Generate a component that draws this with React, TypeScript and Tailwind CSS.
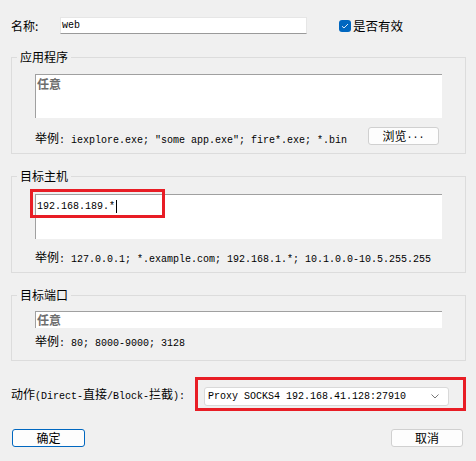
import { FC, ReactNode } from "react";

const mono = "font-['Liberation_Mono','Noto_Sans_CJK_SC',monospace]";

interface GroupProps {
  title: string
  className?: string
  children: ReactNode
}

const Group: FC<GroupProps> = ({ title, className, children }) => {
  return (
    <div className={`relative border border-[#dcdcdc] ${className ?? ""}`}>
      <span className="absolute -top-[8px] left-[5px] bg-[#f0f0f0] px-[3px] text-[12px] leading-[14px] text-black">
        {title}
      </span>
      {children}
    </div>
  );
}

const Example: FC<{ text: string }> = ({ text }) => {
  return (
    <span className={`${mono} block leading-[12px] text-[10px] text-black whitespace-pre`}>
      <span className="text-[12px]">举例</span>{text}
    </span>
  );
}

const Field: FC<{ className?: string; children?: ReactNode }> = ({ className, children }) => {
  return (
    <div className={`bg-white border-t border-l border-[#a0a0a0] ${className ?? ""}`}>
      {children}
    </div>
  );
}

const Placeholder = () => (
  <span className="block pl-[1px] pt-[2px] text-[12px] leading-[14px] font-bold text-[#6d6d6d]">任意</span>
);

const App: FC = () => {
  return (
    <div className="w-[476px] h-[461px] bg-[#f0f0f0] pt-[17px] pl-[11px] pr-[10px] font-['Noto_Sans_CJK_SC',sans-serif] text-black overflow-hidden">
      {/* name row */}
      <div className="flex items-center h-[17px]">
        <span className="w-[49px] text-[12px] leading-[14px]">名称:</span>
        <div className="w-[247px] h-[17px] bg-white border border-[#e6e6e6] border-b-[#9a9a9a] flex items-center pl-[1px]">
          <span className={`${mono} text-[10px] leading-[12px]`}>web</span>
        </div>
        <div className="ml-[32px] w-[12px] h-[12px] rounded-[3px] bg-[#0067c0] flex items-center justify-center">
          <svg width="8" height="6" viewBox="0 0 8 6" fill="none">
            <path d="M1 3.2 L3 5 L7 1" stroke="#dbe9f7" strokeWidth="1" />
          </svg>
        </div>
        <span className="ml-[2px] text-[12.5px] leading-[14px]">是否有效</span>
      </div>

      {/* application */}
      <Group title="应用程序" className="mt-[23px] pl-[23px] pr-[23px] pt-[16px] pb-[8px]">
        <Field className="w-[407px] h-[44px]">
          <Placeholder />
        </Field>
        <div className="flex items-start mt-[9px] h-[18px]">
          <div className="mt-[7px]">
            <Example text={': iexplore.exe; "some app.exe"; fire*.exe; *.bin'} />
          </div>
          <button className="ml-auto mr-[3px] w-[71px] h-[18px] bg-[#fdfdfd] border border-[#d0d0d0] rounded-[3px] text-[12px] leading-[14px] flex items-center justify-center">
            浏览<span className={`${mono} text-[10px]`}>...</span>
          </button>
        </div>
      </Group>

      {/* target host */}
      <Group title="目标主机" className="mt-[22px] pl-[23px] pr-[23px] pt-[17px] pb-[6px]">
        <Field className="w-[407px] h-[45px] relative">
          <div className="flex items-center pl-[1px] pt-[5px]">
            <span className={`${mono} text-[10px] leading-[12px]`}>192.168.189.*</span>
            <span className="ml-[1px] w-[1px] h-[13px] bg-black" />
          </div>
        </Field>
        <div className="absolute left-[18px] top-[12px] w-[135px] h-[29px] border-[3px] border-[#e81d25]" />
        <div className="mt-[14px]">
          <Example text=": 127.0.0.1; *.example.com; 192.168.1.*; 10.1.0.0-10.5.255.255" />
        </div>
      </Group>

      {/* target port */}
      <Group title="目标端口" className="mt-[22px] pl-[23px] pr-[23px] pt-[15px] pb-[10px]">
        <Field className="w-[407px] h-[17px] overflow-hidden">
          <span className="block pl-[1px] text-[12px] leading-[16px] font-bold text-[#6d6d6d]">任意</span>
        </Field>
        <div className="mt-[9px]">
          <Example text=": 80; 8000-9000; 3128" />
        </div>
      </Group>

      {/* action */}
      <div className="flex items-center mt-[26px] h-[19px]">
        <span className={`${mono} w-[193px] text-[10px] leading-[12px] whitespace-pre`}>
          <span className="text-[12px]">动作</span>(Direct-<span className="text-[12px]">直接</span>/Block-<span className="text-[12px]">拦截</span>):
        </span>
        <div className="relative w-[245px] h-[19px]">
          <div className="w-full h-full bg-white border border-[#d9d9d9] rounded-[3px] flex items-center pl-[3px] pr-[9px]">
            <span className={`${mono} text-[10px] leading-[12px] text-black`}>Proxy SOCKS4 192.168.41.128:27910</span>
            <svg className="ml-auto" width="8" height="5" viewBox="0 0 8 5" fill="none">
              <path d="M0.5 0.5 L4 4 L7.5 0.5" stroke="#777" strokeWidth="1" />
            </svg>
          </div>
          <div className="absolute -left-[9px] -top-[10px] w-[271px] h-[34px] border-[3px] border-[#e81d25]" />
        </div>
      </div>

      {/* buttons */}
      <div className="flex justify-between mt-[23px] pl-[1px] pr-[3px]">
        <button className="w-[73px] h-[18px] bg-[#fdfdfd] border border-[#0067c0] rounded-[3px] text-[12px] leading-[14px] flex items-center justify-center">
          确定
        </button>
        <button className="w-[72px] h-[18px] bg-[#fdfdfd] border border-[#d0d0d0] rounded-[3px] text-[12px] leading-[14px] flex items-center justify-center">
          取消
        </button>
      </div>
    </div>
  );
}

export default App;
